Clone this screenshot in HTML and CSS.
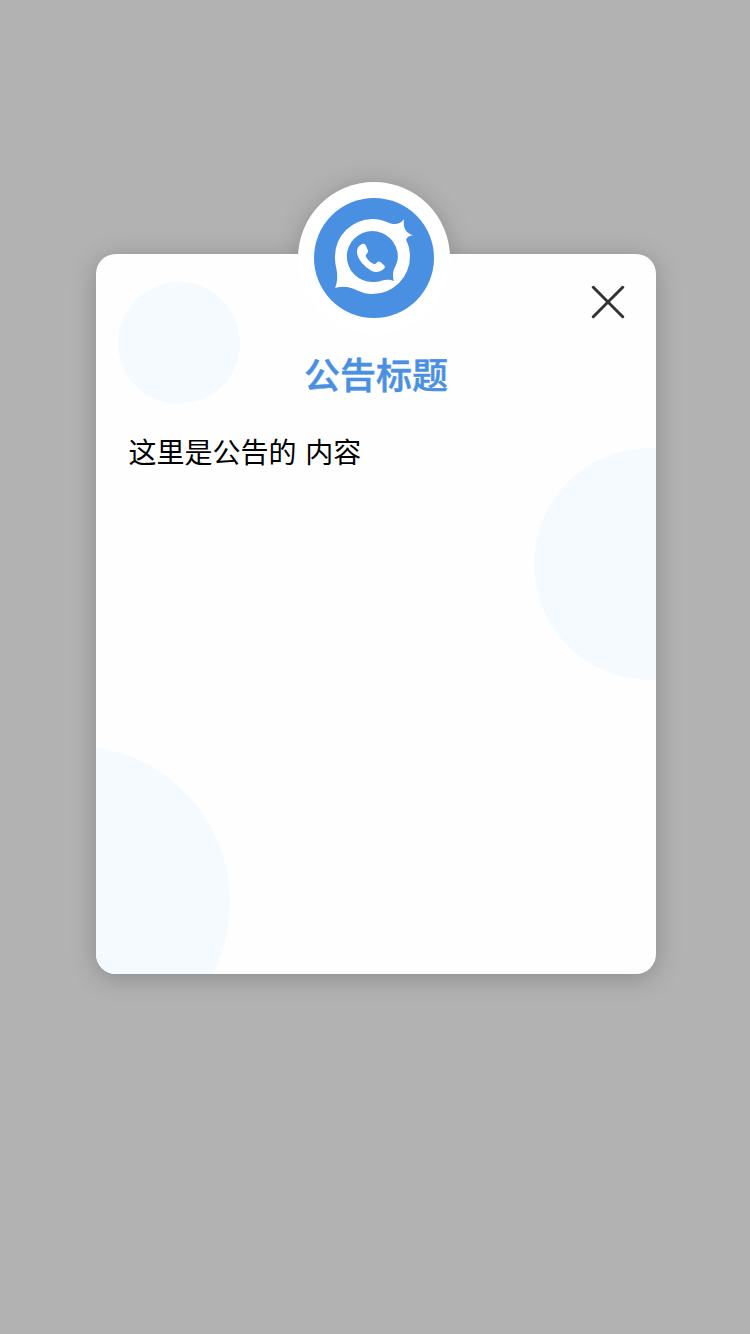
FILE: index.html
```html
<!DOCTYPE html>
<html lang="zh-CN">
<head>
<meta charset="utf-8">
<title>公告</title>
<link rel="stylesheet" href="styles.css">
</head>
<body>
<main class="overlay">
  <section class="dialog" role="dialog" aria-labelledby="notice-title">
    <div class="backdrop" aria-hidden="true">
      <span class="bubble bubble-top"></span>
      <span class="bubble bubble-right"></span>
      <span class="bubble bubble-bottom"></span>
    </div>
    <div class="badge">
      <svg class="logo" viewBox="0 0 360 360" aria-hidden="true">
        <circle cx="180" cy="180" r="180" fill="#4a90e2"/>
        <g transform="translate(-72 -72)">
          <path fill="#fff" d="M135.500 342C144 319 143 300 138 278C135 266 135 256 135 247A112.500 112.500 0 0 1 247 135C262 135 277 138 290 144C308 153 328 154 342 136C339 159 345 177 369 184C359 186 352 188 348 197C356 212 360 230 360 247A112.500 112.500 0 0 1 247 360C231 360 217 356 204 350C180 339 160 335 135.500 342Z"/>
          <path fill="#4a90e2" d="M247 171A76.500 76.500 0 0 1 323.500 247C324 257 321 266 317 275C309 290 306 304 312 321C298 315 286 317 274 320C265 323 256 324 247 324A76.500 76.500 0 0 1 247 171Z"/>
          <path fill="#fff" d="M215 211C220 208 225 209 227 214L233 227C236 233 233 237 229 240C226 244 227 248 230 252C236 261 242 266 250 269C254 271 257 269 260 266C264 262 267 262 272 265L282 274C286 278 286 281 281 285C274 291 267 294 259 294C249 294 239 288 228 279C214 267 202 251 201 235C200 224 205 217 215 211Z"/>
        </g>
      </svg>
    </div>
    <button class="close" type="button" aria-label="关闭">
      <svg class="close-icon" viewBox="0 0 34 34" aria-hidden="true">
        <path d="M2.300 2.300L31.700 31.700M31.700 2.300L2.300 31.700" stroke="#333" stroke-width="3" stroke-linecap="round"/>
      </svg>
    </button>
    <h1 class="title" id="notice-title">公告标题</h1>
    <p class="content">这里是公告的 内容</p>
  </section>
</main>
</body>
</html>
```
FILE: styles.css
```css
* { box-sizing: border-box; }

body {
  margin: 0;
  font-family: "Noto Sans CJK SC", sans-serif;
}

.overlay {
  display: flex;
  justify-content: center;
  align-items: flex-start;
  height: 1334px;
  padding: 254px 94px 0 96px;
  background: #b2b2b2;
}

.dialog {
  position: relative;
  width: 560px;
  height: 720px;
  padding: 94px 32px 32px;
  border-radius: 20px;
  background: #fefefe;
  filter: drop-shadow(0 4px 12px rgba(0, 0, 0, 0.22));
}

.backdrop {
  position: absolute;
  inset: 0;
  overflow: hidden;
  border-radius: 20px;
}

.bubble {
  position: absolute;
  border-radius: 50%;
  background: #f4fafe;
}

.bubble-top { left: 22px; top: 28px; width: 122px; height: 122px; }
.bubble-right { left: 438px; top: 194px; width: 232px; height: 232px; }
.bubble-bottom { left: -178px; top: 492px; width: 312px; height: 312px; }

/* Round logo overlapping the top edge of the dialog */
.badge {
  position: absolute;
  left: 202px;
  top: -72px;
  width: 152px;
  height: 152px;
  padding: 16px;
  border-radius: 50%;
  background: #fff;
}

.logo {
  display: block;
  width: 120px;
  height: 120px;
}

.close {
  position: absolute;
  top: 31px;
  right: 31px;
  padding: 0;
  border: 0;
  background: none;
}

.close-icon {
  display: block;
  width: 34px;
  height: 34px;
  fill: none;
}

.title {
  position: relative;
  margin: 0;
  color: #4a90e2;
  font-size: 36px;
  font-weight: 500;
  line-height: 50px;
  text-align: center;
  -webkit-text-stroke: 0.5px #4a90e2;
}

.content {
  position: relative;
  margin: 33px 0 0;
  padding-left: 0.5px;
  color: #000;
  font-size: 28px;
  font-weight: 400;
  line-height: 40px;
  word-spacing: 2.5px;
}
```
